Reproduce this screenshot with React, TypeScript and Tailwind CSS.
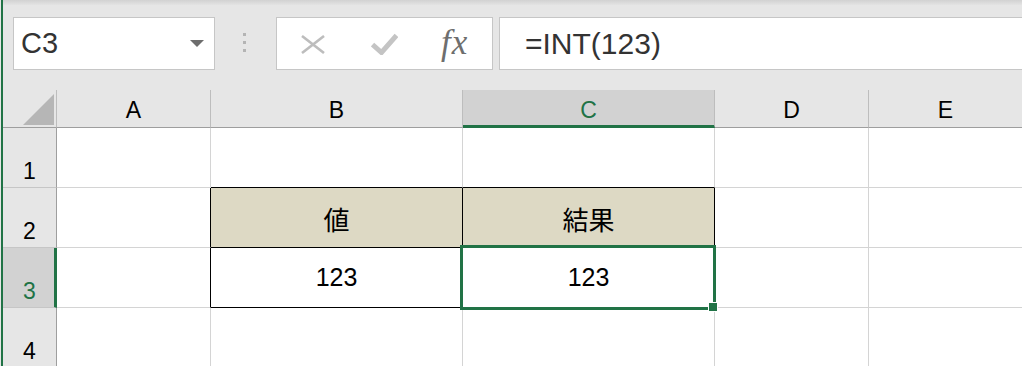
import React from "react";

const GREEN = "#217346";

const cols = ["A", "B", "C", "D", "E"];
const colW = ["w-[154px]", "w-[252px]", "w-[252px]", "w-[154px]", "w-[154px]"];

function CellText({ children }: { children?: React.ReactNode }) {
  return <span className="text-[25px] leading-none text-black">{children}</span>;
}

export default function App() {
  const font = { fontFamily: '"Liberation Sans", "Noto Sans CJK JP", sans-serif' };
  const rows = [1, 2, 3, 4];

  const bodyCell = (r: number, c: number) => {
    let cls = "flex items-center justify-center border-r border-b border-[#d4d4d4] h-[60px] ";
    let content: React.ReactNode = null;
    const inTable = (r === 2 || r === 3) && (c === 1 || c === 2);
    const rb = inTable || ((r === 2 || r === 3) && c === 0) ? "border-r-black" : "";
    const bb = inTable || (r === 1 && (c === 1 || c === 2)) ? "border-b-black" : "";
    cls += rb + " " + bb + " ";
    cls += r === 2 && (c === 1 || c === 2) ? "bg-[#ddd9c4] " : "bg-white ";
    if (r === 2 && c === 1)
      content = (
        <span className="text-[26px] leading-none pt-[2px]" style={{ fontFamily: '"Noto Sans CJK JP", sans-serif' }}>
          値
        </span>
      );
    if (r === 2 && c === 2)
      content = (
        <span className="text-[26px] leading-none pt-[2px]" style={{ fontFamily: '"Noto Sans CJK JP", sans-serif' }}>
          結果
        </span>
      );
    if (r === 3 && (c === 1 || c === 2)) content = <CellText>123</CellText>;
    return (
      <div key={`${r}-${c}`} className={cls + colW[c] + " shrink-0"}>
        {content}
      </div>
    );
  };

  return (
    <div className="w-[1022px] h-[366px] overflow-hidden flex bg-[#e6e6e6]" style={font}>
      <div className="w-[1px] shrink-0 bg-[#e6e6e6]" />
      <div className="w-[2px] shrink-0 bg-[#217346]" />
      <div className="flex flex-col flex-1 min-w-0">
        {/* toolbar */}
        <div className="h-[90px] shrink-0 flex flex-col">
          <div className="h-[5px] bg-gradient-to-b from-[#d2d2d2] to-[#e3e3e3]" />
          <div className="flex items-start pt-[12px]">
            {/* name box */}
            <div className="ml-[10px] w-[202px] h-[53px] bg-white border border-[#c6c6c6] flex items-center justify-between pl-[7px] pr-[10px] shrink-0">
              <span className="text-[29px] leading-none text-[#333]">C3</span>
              <svg width="14" height="7" viewBox="0 0 14 7">
                <polygon points="0,0 14,0 7,7" fill="#6d6d6d" />
              </svg>
            </div>
            {/* dots */}
            <div className="ml-[28px] h-[53px] flex flex-col gap-[5px] pt-[16px] shrink-0">
              <div className="w-[3px] h-[3px] bg-[#b4b4b4]" />
              <div className="w-[3px] h-[3px] bg-[#b4b4b4]" />
              <div className="w-[3px] h-[3px] bg-[#b4b4b4]" />
            </div>
            {/* fx box */}
            <div className="ml-[30px] w-[217px] h-[53px] bg-white border border-[#c6c6c6] flex items-center pl-[24px] shrink-0">
              <svg width="24" height="19" viewBox="0 0 24 19" className="mt-[2px]">
                <line x1="1" y1="1" x2="23" y2="18" stroke="#bdbdbd" strokeWidth="2.6" />
                <line x1="23" y1="1" x2="1" y2="18" stroke="#bdbdbd" strokeWidth="2.6" />
              </svg>
              <svg width="27" height="22" viewBox="0 0 27 22" className="ml-[46px]">
                <path d="M1.5 11.5 L10.5 19.5 L25.5 2.5" fill="none" stroke="#c4c4c4" strokeWidth="5" />
              </svg>
              <span
                className="ml-[43px] text-[35px] leading-none italic text-[#6e6e6e] -mt-[2px] tracking-[1px]"
                style={{ fontFamily: '"Liberation Serif", serif' }}
              >
                fx
              </span>
            </div>
            {/* formula bar */}
            <div className="ml-[6px] w-[600px] h-[53px] bg-white border border-[#c6c6c6] flex items-center pl-[25px] shrink-0">
              <span className="text-[30px] leading-none text-[#333]">=INT(123)</span>
            </div>
          </div>
        </div>

        {/* grid */}
        <div className="relative">
          <div className="flex h-[38px]">
            <div className="w-[54px] shrink-0 border-r border-b border-r-[#bdbdbd] border-b-[#9e9e9e] flex items-end justify-end pr-[2px] pb-[2px]">
              <svg width="31" height="31" viewBox="0 0 31 31">
                <polygon points="31,0 31,31 0,31" fill="#b6b6b6" />
              </svg>
            </div>
            {cols.map((c, i) => {
              const sel = c === "C";
              return (
                <div
                  key={c}
                  className={
                    colW[i] +
                    " shrink-0 flex items-end justify-center border-r border-[#bdbdbd] " +
                    (sel
                      ? "bg-[#d2d2d2] border-b-[3px] border-b-[#217346] pb-[3px] "
                      : "border-b border-b-[#9e9e9e] pb-[5px] ")
                  }
                >
                  <span className={"text-[23px] leading-none " + (sel ? "text-[#217346]" : "text-black")}>{c}</span>
                </div>
              );
            })}
          </div>
          {rows.map((r) => (
            <div key={r} className="flex h-[60px]">
              <div
                className={
                  "w-[54px] shrink-0 flex items-end justify-center pb-[4px] border-b border-b-[#c6c6c6] " +
                  (r === 3
                    ? "bg-[#d2d2d2] border-r-[3px] border-r-[#217346] pl-[2px]"
                    : "border-r border-r-[#9e9e9e]")
                }
              >
                <span className={"text-[23px] leading-none " + (r === 3 ? "text-[#217346]" : "text-black")}>{r}</span>
              </div>
              {cols.map((_, c) => bodyCell(r, c))}
            </div>
          ))}
          <div
            className="absolute left-[457px] top-[155px] w-[256px] h-[65px] border-[3px] pointer-events-none"
            style={{ borderColor: GREEN }}
          />
          <div className="absolute left-[705px] top-[212px] w-[10px] h-[10px] bg-[#217346] border border-white" />
        </div>
      </div>
    </div>
  );
}
